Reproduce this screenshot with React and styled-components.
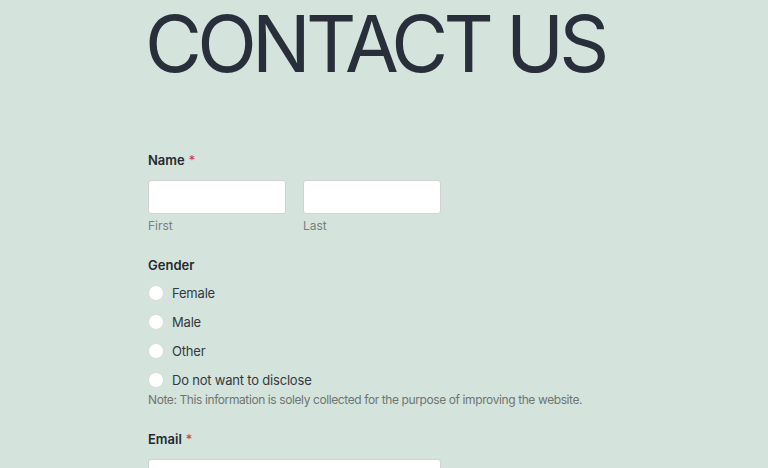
import React from 'react'
import styled, { createGlobalStyle } from 'styled-components'

const GlobalStyle = createGlobalStyle`
  html, body {
    margin: 0;
    padding: 0;
    background: #d4e3dc;
    font-family: Inter, "Noto Sans", sans-serif;
    color: #2c3338;
  }
`

const Page = styled.div`
  padding-left: 145px;
  padding-top: 5px;
  height: 463px;
  overflow: hidden;
`

const Title = styled.h1`
  margin: 0;
  padding-right: 8px;
  font-size: 78px;
  line-height: 78px;
  font-weight: 400;
  letter-spacing: -4.8px;
  color: #282f3b;
  white-space: nowrap;
`

const Form = styled.form`
  margin-top: 67px;
  margin-left: 3px;
  width: 293px;
  display: flex;
  flex-direction: column;
`

const Field = styled.div`
  display: flex;
  flex-direction: column;
  margin-bottom: ${props => props.spacing || 21}px;
`

const Label = styled.div`
  font-size: 13px;
  line-height: 20px;
  font-weight: 600;
  color: #262a2e;
  margin-bottom: ${props => props.gap || 10}px;
`

const Required = styled.span`
  color: #d63637;
  font-weight: 400;
  margin-left: 4px;
`

const Row = styled.div`
  display: flex;
  gap: 17px;
`

const Column = styled.div`
  display: flex;
  flex-direction: column;
  flex: 1;
`

const Input = styled.input`
  box-sizing: border-box;
  width: 100%;
  height: 34px;
  border: 1px solid #cfd3d1;
  border-radius: 3px;
  background: #fff;
  padding: 0 10px;
  font: inherit;
`

const Sublabel = styled.div`
  margin-top: 4px;
  font-size: 12px;
  line-height: 16px;
  color: #7a807d;
`

const Options = styled.div`
  display: flex;
  flex-direction: column;
  gap: 7px;
`

const Option = styled.label`
  display: flex;
  align-items: center;
  gap: 8px;
  height: 22px;
  font-size: 13px;
  letter-spacing: -0.2px;
  color: #333a3f;
`

const Radio = styled.span`
  box-sizing: border-box;
  width: 16px;
  height: 16px;
  border-radius: 50%;
  background: #fff;
  border: 1px solid #d8dedb;
`

const Note = styled.div`
  margin-top: 1px;
  font-size: 12px;
  line-height: 16px;
  letter-spacing: -0.4px;
  color: #6f7672;
  white-space: nowrap;
`

const genders = ['Female', 'Male', 'Other', 'Do not want to disclose']

export default function App() {
  return (
    <Page>
      <GlobalStyle />
      <Title>CONTACT US</Title>
      <Form>
        <Field>
          <Label>
            Name<Required>*</Required>
          </Label>
          <Row>
            <Column>
              <Input type="text" />
              <Sublabel>First</Sublabel>
            </Column>
            <Column>
              <Input type="text" />
              <Sublabel>Last</Sublabel>
            </Column>
          </Row>
        </Field>
        <Field>
          <Label gap={7}>Gender</Label>
          <Options>
            {genders.map(g => (
              <Option key={g}>
                <Radio />
                {g}
              </Option>
            ))}
          </Options>
          <Note>
            Note: This information is solely collected for the purpose of improving the website.
          </Note>
        </Field>
        <Field>
          <Label>
            Email<Required>*</Required>
          </Label>
          <Input type="email" />
        </Field>
      </Form>
    </Page>
  )
}
